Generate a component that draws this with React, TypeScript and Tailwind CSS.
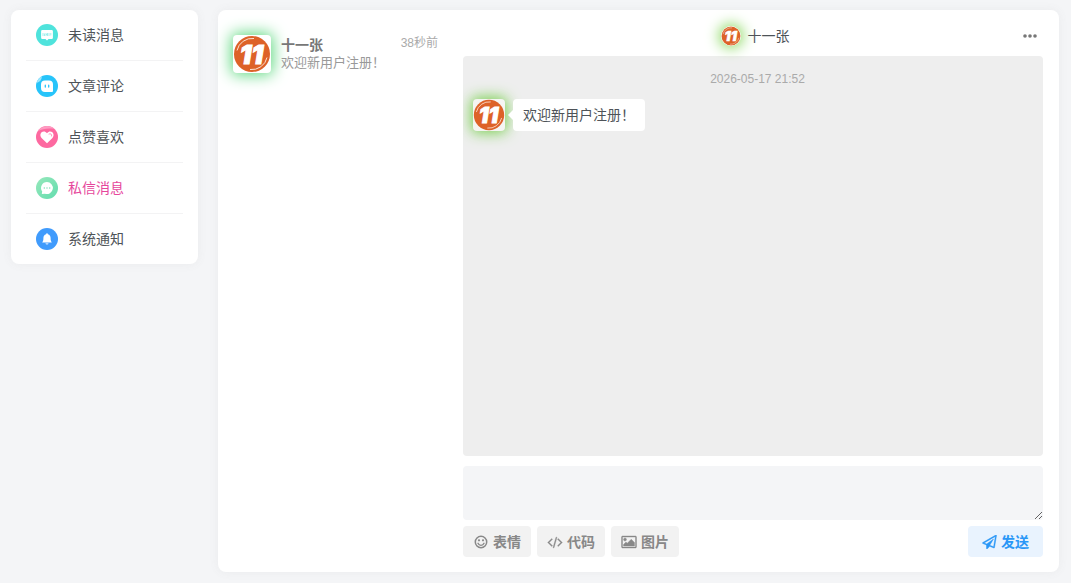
import React, { useState } from "react";
import { clsx } from "clsx";

type IconProps = { className?: string };

const UnreadIcon: React.FC = () => (
  <svg viewBox="0 0 22 22" className="w-[22px] h-[22px]" aria-hidden="true">
    <circle cx="11" cy="11" r="11" fill="#4fe3dc" />
    <path d="M6.300 6h9.400a1.200 1.200 0 0 1 1.200 1.200v6.600a1.200 1.200 0 0 1-1.200 1.200h-3.200L11 16.500 9.500 15H6.300a1.200 1.200 0 0 1-1.200-1.200V7.200A1.200 1.200 0 0 1 6.300 6z" fill="#fff" />
    <path d="M7 9v3M8.500 9.500v2.500M10 9v3M10 10.500h1.500M11.500 9v3M13 9v3M14.800 9v2.500" stroke="#8eece8" strokeWidth=".8" />
  </svg>
);

const CommentIcon: React.FC = () => (
  <svg viewBox="0 0 22 22" className="w-[22px] h-[22px]" aria-hidden="true">
    <circle cx="11" cy="11" r="11" fill="#27c4fa" />
    <path d="M.5 8A11 11 0 0 1 6 1.200C5.500 5 4 7 .5 8z" fill="#9ce6fd" />
    <path d="M9 5.500h4a4 4 0 0 1 4 4v6.500a1 1 0 0 1-1 1H9a4 4 0 0 1-4-4V9.500a4 4 0 0 1 4-4z" fill="#fff" />
    <path d="M9.300 10.200v1.800M12.700 10.200v1.800" stroke="#27c4fa" strokeWidth="1.300" strokeLinecap="round" />
  </svg>
);

const LikeIcon: React.FC = () => (
  <svg viewBox="0 0 22 22" className="w-[22px] h-[22px]" aria-hidden="true">
    <circle cx="11" cy="11" r="11" fill="#fd69a0" />
    <path d="M1.500 5.500A11 11 0 0 1 18.500 3C13 2 6.500 2.500 1.500 5.500z" fill="#fe9cc2" />
    <path d="M11 17.300 5.800 12.200C1.800 8 7.300 2.800 11 7.200c3.700-4.400 9.200.8 5.200 5z" fill="#fff" />
    <path d="M13 8c1.600-1 3.200.4 2.600 2" fill="none" stroke="#fd8db7" strokeWidth=".9" strokeLinecap="round" />
  </svg>
);

const PrivateIcon: React.FC = () => (
  <svg viewBox="0 0 22 22" className="w-[22px] h-[22px]" aria-hidden="true">
    <defs>
      <linearGradient id="private-bg" x1="0" y1="0" x2="1" y2="1">
        <stop offset="0" stopColor="#97e8bb" />
        <stop offset="1" stopColor="#62dcae" />
      </linearGradient>
    </defs>
    <circle cx="11" cy="11" r="11" fill="url(#private-bg)" />
    <path d="M11 5a6 6 0 1 1-2 11.700L5.800 17l.4-2.500A6 6 0 0 1 11 5z" fill="#fff" />
    <path d="M8.300 11h.01M11 11h.01M13.700 11h.01" stroke="#83e0b8" strokeWidth="1.500" strokeLinecap="round" />
  </svg>
);

const NoticeIcon: React.FC = () => (
  <svg viewBox="0 0 22 22" className="w-[22px] h-[22px]" aria-hidden="true">
    <circle cx="11" cy="11" r="11" fill="#409bfc" />
    <path d="M11 5.300c.6 0 .9.400.9.900 1.900.5 2.700 2 2.700 3.900 0 2.400.3 3 1.200 4.400H6.200c.9-1.400 1.200-2 1.200-4.400 0-1.900.8-3.400 2.700-3.900 0-.5.3-.9.900-.9z" fill="#fff" />
    <path d="M9.500 15.200h3c0 .8-.7 1.300-1.500 1.300s-1.500-.5-1.500-1.300z" fill="#d5e9ff" />
  </svg>
);

const SmileIcon: React.FC<IconProps> = ({ className }) => (
  <svg viewBox="0 0 14 14" className={className} aria-hidden="true">
    <circle cx="7" cy="7" r="5.700" fill="none" stroke="currentColor" strokeWidth="1.500" />
    <circle cx="5" cy="5.300" r="1.100" fill="currentColor" />
    <circle cx="9" cy="5.300" r="1.100" fill="currentColor" />
    <path d="M4 8.300c1.100 2.700 4.900 2.700 6 0" fill="none" stroke="currentColor" strokeWidth="1.400" strokeLinecap="round" />
  </svg>
);

const CodeIcon: React.FC<IconProps> = ({ className }) => (
  <svg viewBox="0 0 1920 1792" className={className} fill="currentColor" stroke="currentColor" strokeWidth="50" aria-hidden="true">
    <path d="M617 1399l-50 50q-10 10-23 10t-23-10l-466-466q-10-10-10-23t10-23l466-466q10-10 23-10t23 10l50 50q10 10 10 23t-10 23l-393 393 393 393q10 10 10 23t-10 23zm591-1067l-373 1291q-4 13-15.500 19.500t-23.500 2.500l-62-17q-13-4-19.500-15.500t-2.500-24.500l373-1291q4-13 15.500-19.500t23.500-2.500l62 17q13 4 19.500 15.500t2.500 24.500zm657 651l-466 466q-10 10-23 10t-23-10l-50-50q-10-10-10-23t10-23l393-393-393-393q-10-10-10-23t10-23l50-50q10-10 23-10t23 10l466 466q10 10 10 23t-10 23z" />
  </svg>
);

const PictureIcon: React.FC<IconProps> = ({ className }) => (
  <svg viewBox="0 0 1920 1792" className={className} fill="currentColor" stroke="currentColor" strokeWidth="50" aria-hidden="true">
    <path d="M640 576q0 80-56 136t-136 56-136-56-56-136 56-136 136-56 136 56 56 136zm1024 384v448h-1408v-192l320-320 160 160 512-512zm96-704h-1600q-13 0-22.500 9.500t-9.500 22.500v1216q0 13 9.500 22.500t22.500 9.500h1600q13 0 22.500-9.500t9.500-22.500v-1216q0-13-9.500-22.500t-22.500-9.500zm160 32v1216q0 66-47 113t-113 47h-1600q-66 0-113-47t-47-113v-1216q0-66 47-113t113-47h1600q66 0 113 47t47 113z" />
  </svg>
);

const SendIcon: React.FC<IconProps> = ({ className }) => (
  <svg viewBox="0 0 1792 1792" className={className} fill="currentColor" stroke="currentColor" strokeWidth="60" aria-hidden="true">
    <path d="M1764 11q33 24 27 64l-256 1536q-5 29-32 45-14 8-31 8-11 0-24-5l-527-215-298 327q-18 21-47 21-14 0-23-4-19-7-30-23.500t-11-36.500v-452l-472-193q-37-14-40-55-3-39 32-59l1664-960q35-21 68 2zm-342 1499l221-1323-1434 827 336 137 863-639-478 797z" />
  </svg>
);

const Avatar: React.FC<IconProps> = ({ className }) => (
  <svg viewBox="0 0 38 38" className={className} role="img" aria-label="十一张">
    <circle cx="19" cy="19" r="18" fill="#dd6228" />
    <path d="M4 15.500A15.500 15.500 0 0 1 21 3.500M34 22.500A15.500 15.500 0 0 1 17 34.500" fill="none" stroke="#fbe3d6" strokeWidth="1" />
    <text
      x="18.500"
      y="28.500"
      textAnchor="middle"
      fill="#fff"
      stroke="#fff"
      strokeWidth="1"
      className="font-['Inter',sans-serif] text-[26px] font-black italic"
    >
      11
    </text>
  </svg>
);

const menuItems = [
  { key: "unread", label: "未读消息", Icon: UnreadIcon },
  { key: "comment", label: "文章评论", Icon: CommentIcon },
  { key: "like", label: "点赞喜欢", Icon: LikeIcon },
  { key: "private", label: "私信消息", Icon: PrivateIcon },
  { key: "notice", label: "系统通知", Icon: NoticeIcon },
];

const tools = [
  { label: "表情", Icon: SmileIcon },
  { label: "代码", Icon: CodeIcon },
  { label: "图片", Icon: PictureIcon },
];

const App: React.FC = () => {
  const [active, setActive] = useState("private");
  const [draft, setDraft] = useState("");

  return (
    <div className="min-h-screen bg-[#f4f5f7] pt-[10px] pb-[11px] pl-[11px] pr-3 flex items-start gap-5 text-sm leading-5 text-[#4e5358] font-['Liberation_Sans','Noto_Sans_CJK_SC',sans-serif]">
      {/* Message categories */}
      <nav className="w-[187px] shrink-0 rounded-lg bg-white px-[15px] shadow-[0_0_10px_rgba(116,116,116,0.08)]">
        {menuItems.map(({ key, label, Icon }) => (
          <a
            key={key}
            href={`#${key}`}
            onClick={() => setActive(key)}
            className={clsx(
              "flex h-[51px] items-center gap-[10px] border-b border-[#f3f3f4] px-[10px] last:h-[50px] last:border-b-0",
              active === key && "text-[#e6479c]"
            )}
          >
            <Icon />
            <span>{label}</span>
          </a>
        ))}
      </nav>

      <main className="flex min-w-0 flex-1 gap-[25px] rounded-lg bg-white pl-[15px] pr-4 pb-[15px] shadow-[0_0_10px_rgba(116,116,116,0.08)]">
        {/* Contacts */}
        <div className="w-[205px] shrink-0 pt-[25px]">
          <button type="button" className="flex w-full items-start gap-[10px] text-left">
            <Avatar className="w-[38px] h-[38px] shrink-0 rounded bg-white shadow-[0_0_15px_2px_#5fd880]" />
            <span className="min-w-0 flex-1">
              <span className="flex justify-between">
                <span className="font-bold leading-5 text-[#777]">十一张</span>
                <span className="text-xs leading-4 text-[#aaa]">38秒前</span>
              </span>
              <span className="block truncate text-[13px] leading-4 text-[#999]">欢迎新用户注册！</span>
            </span>
          </button>
        </div>

        {/* Conversation */}
        <section className="min-w-0 flex-1">
          <header className="flex h-[46px] items-center pt-[6px]">
            <span className="w-6" />
            <div className="flex flex-1 items-center justify-center gap-[7px]">
              <Avatar className="w-5 h-5 rounded-full bg-white shadow-[0_0_14px_2px_#8ad860]" />
              <span>十一张</span>
            </div>
            <button type="button" aria-label="更多" className="flex w-5 justify-start text-[#777]">
              <svg viewBox="0 0 14 4" className="w-[14px] h-1" fill="currentColor" aria-hidden="true">
                <circle cx="2" cy="2" r="1.800" />
                <circle cx="7" cy="2" r="1.800" />
                <circle cx="12" cy="2" r="1.800" />
              </svg>
            </button>
          </header>

          <div className="h-[400px] overflow-y-auto rounded bg-[#eee] px-[10px] pt-[13px]">
            <p className="pl-[9px] text-center text-xs leading-5 text-[#aaa]">2026-05-17 21:52</p>
            <div className="mt-[10px] flex items-start gap-2">
              <Avatar className="w-8 h-8 rounded bg-[#f5f5f3] shadow-[0_0_14px_2px_#7bd052]" />
              <div className="relative rounded bg-white px-[10px] py-[6px]">
                <span className="absolute top-[11px] -left-[5px] border-y-5 border-r-5 border-y-transparent border-r-white" />
                欢迎新用户注册！
              </div>
            </div>
          </div>

          <form onSubmit={e => e.preventDefault()}>
            <textarea
              aria-label="消息内容"
              value={draft}
              onChange={e => setDraft(e.target.value)}
              className="mt-[10px] block h-[54px] w-full rounded bg-[#f4f5f7] px-[10px] py-[6px] outline-none"
            />
            <div className="mt-[6px] flex gap-[6px] font-bold">
              {tools.map(({ label, Icon }) => (
                <button key={label} type="button" className="flex h-[31px] items-center gap-1 rounded bg-[#f2f2f2] px-[10px] text-[#888]">
                  <Icon className="w-4 h-[14px]" />
                  {label}
                </button>
              ))}
              <button type="submit" className="ml-auto flex h-[31px] items-center gap-1 rounded bg-[#e9f3fe] px-[14px] text-[#2997f7]">
                <SendIcon className="w-[15px] h-[14px]" />
                发送
              </button>
            </div>
          </form>
        </section>
      </main>
    </div>
  );
};

export default App;
